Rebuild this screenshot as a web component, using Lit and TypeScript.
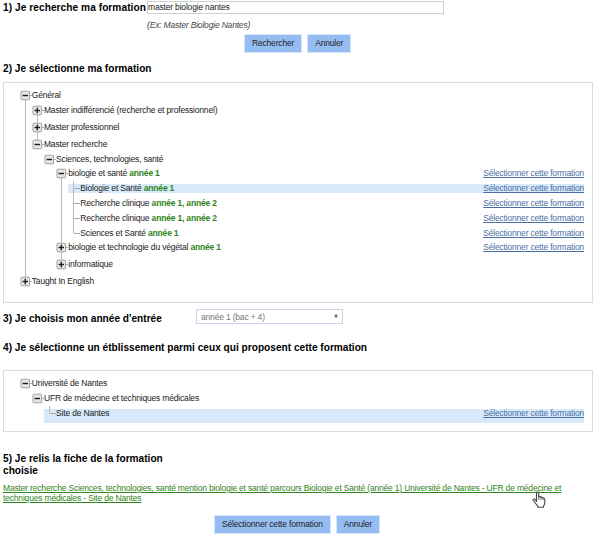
import { LitElement, html, css, svg, nothing } from "lit";
import { customElement, property } from "lit/decorators.js";
import { classMap } from "lit/directives/class-map.js";

interface TreeNode {
  label: string;
  years?: string;
  state?: "open" | "closed";
  link?: boolean;
  highlight?: "thin" | "full";
  children?: TreeNode[];
}

const FORMATIONS: TreeNode[] = [
  {
    label: "Général",
    state: "open",
    children: [
      { label: "Master indifférencié (recherche et professionnel)", state: "closed" },
      { label: "Master professionnel", state: "closed" },
      {
        label: "Master recherche",
        state: "open",
        children: [
          {
            label: "Sciences, technologies, santé",
            state: "open",
            children: [
              {
                label: "biologie et santé",
                years: "année 1",
                state: "open",
                link: true,
                children: [
                  { label: "Biologie et Santé", years: "année 1", link: true, highlight: "thin" },
                  { label: "Recherche clinique", years: "année 1, année 2", link: true },
                  { label: "Recherche clinique", years: "année 1, année 2", link: true },
                  { label: "Sciences et Santé", years: "année 1", link: true },
                ],
              },
              { label: "biologie et technologie du végétal", years: "année 1", state: "closed", link: true },
              { label: "informatique", state: "closed" },
            ],
          },
        ],
      },
    ],
  },
  { label: "Taught In English", state: "closed" },
];

const SITES: TreeNode[] = [
  {
    label: "Université de Nantes",
    state: "open",
    children: [
      {
        label: "UFR de médecine et techniques médicales",
        state: "open",
        children: [{ label: "Site de Nantes", link: true, highlight: "full" }],
      },
    ],
  },
];

@customElement("choice-tree")
export class ChoiceTree extends LitElement {
  @property({ attribute: false }) nodes: TreeNode[] = [];

  static styles = css`
    :host { display: block; }
    ul { list-style: none; margin: 0; padding: 0; }
    .children { padding-left: 12.15px; }
    .node { position: relative; }
    .node::before {
      content: "";
      position: absolute;
      left: 5px;
      top: 0;
      bottom: 0;
      width: 1px;
      background: #bcbcbc;
      z-index: 1;
    }
    .node.first.branch::before { top: 7px; }
    .node.last::before { bottom: auto; height: 7px; }
    .node.last.first.branch::before { display: none; }
    .row {
      display: flex;
      align-items: flex-start;
      height: 14.8px;
      line-height: 14.8px;
    }
    .row.closed { height: 17px; }
    .row.full {
      height: 17.5px;
      background: linear-gradient(#d8eafa, #d8eafa) 0 3px / 100% 14.5px no-repeat;
    }
    .row.thin {
      background: linear-gradient(#d8eafa, #d8eafa) 0 3px / 100% 9px no-repeat;
    }
    .handle {
      position: relative;
      z-index: 2;
      flex: none;
      width: 12.3px;
      height: 15px;
    }
    .handle svg { display: block; }
    .label { white-space: pre; color: #222; }
    .years { color: #2f8420; font-weight: bold; }
    .pick {
      margin-left: auto;
      color: #4a6fa5;
      text-decoration: underline;
      white-space: nowrap;
    }
  `;

  private handle(state?: "open" | "closed") {
    if (!state) {
      return svg`<path d="M6 7.5H12.4" stroke="#a8a8a8" fill="none"/>`;
    }
    return svg`
      <path d="M10 7.5H12.4" stroke="#a8a8a8" fill="none"/>
      <rect x="1" y="3.2" width="8.6" height="8.6" rx="0.8" fill="#e6e6e6" stroke="#a2a2a2"/>
      <path d="M2.6 7.5H8" stroke="#1c1c1c" stroke-width="1.4" fill="none"/>
      ${state === "closed" ? svg`<path d="M5.3 4.8V10.2" stroke="#1c1c1c" stroke-width="1.4" fill="none"/>` : nothing}
    `;
  }

  private node(n: TreeNode, i: number, all: TreeNode[]): unknown {
    const item = { node: true, first: i === 0, last: i === all.length - 1, branch: !!n.state };
    const row = {
      row: true,
      closed: n.state === "closed",
      thin: n.highlight === "thin",
      full: n.highlight === "full",
    };
    return html`<li class=${classMap(item)}>
      <div class=${classMap(row)}>
        <span class="handle"><svg width="12.3" height="15" viewBox="0 0 12.3 15">${this.handle(n.state)}</svg></span>
        <span class="label">${n.label}${n.years ? html` <span class="years">${n.years}</span>` : nothing}</span>
        ${n.link ? html`<a class="pick">Sélectionner cette formation</a>` : nothing}
      </div>
      ${n.children ? html`<ul class="children">${n.children.map((c, k, list) => this.node(c, k, list))}</ul>` : nothing}
    </li>`;
  }

  render() {
    return html`<ul>${this.nodes.map((n, i, all) => this.node(n, i, all))}</ul>`;
  }
}

@customElement("app-root")
export class AppRoot extends LitElement {
  static styles = css`
    :host {
      display: flex;
      flex-direction: column;
      box-sizing: border-box;
      width: 600px;
      height: 543px;
      padding: 0 7px 0 3px;
      overflow: hidden;
      background: #fff;
      color: #222;
      font-family: "Liberation Sans", Arial, sans-serif;
      font-size: 8.5px;
      letter-spacing: -0.18px;
    }
    h2 {
      margin: 0;
      color: #000;
      font-size: 10.15px;
      font-weight: bold;
      letter-spacing: 0;
      line-height: 12px;
      white-space: nowrap;
    }
    .search {
      box-sizing: border-box;
      display: grid;
      grid-template-columns: 143.5px 297px;
      height: 63px;
      padding-top: 1px;
      align-content: start;
    }
    .search h2 { padding-top: 1px; letter-spacing: 0.06px; }
    .field {
      box-sizing: border-box;
      height: 13px;
      border: 1px solid #cfcfcf;
      padding: 0 0 0 .5px;
      line-height: 11px;
      color: #222;
      white-space: nowrap;
    }
    .hint { grid-column: 2; padding: 5px 0 0 .5px; line-height: 12px; font-style: italic; color: #444; }
    .buttons { display: flex; gap: 5px; }
    .search .buttons { grid-column: 2; padding: 2.5px 0 0 97.5px; }
    .button {
      box-sizing: border-box;
      height: 19px;
      padding: 0 8px;
      border: 0;
      outline: 1px solid #d5e5fa;
      outline-offset: -1px;
      background: #96bdf2;
      color: #222;
      font: inherit;
      letter-spacing: inherit;
      line-height: 19px;
      white-space: nowrap;
    }
    .frame {
      box-sizing: border-box;
      width: 590px;
      border: 1px solid #dcdcdc;
      padding: 0 8px 0 15.5px;
    }
    .formations { height: 221px; margin-top: 7px; padding-top: 5px; }
    .sites { height: 62px; margin-top: 16px; padding-top: 5px; }
    .year { box-sizing: border-box; display: flex; align-items: flex-start; height: 39px; padding-top: 6px; }
    .year h2 { width: 193px; padding-top: 4px; }
    .select {
      box-sizing: border-box;
      display: flex;
      align-items: center;
      justify-content: space-between;
      width: 147px;
      height: 15px;
      border: 1px solid #c9d6ea;
      padding: 0 4px;
      color: #777;
    }
    .review { width: 170px; margin-top: 21px; }
    .review h2 { white-space: normal; }
    .summary {
      position: relative;
      width: 570px;
      margin-top: 7px;
      line-height: 9.5px;
      color: #2f8420;
    }
    .line { display: block; white-space: nowrap; text-decoration: underline; }
    .cursor { position: absolute; left: 529px; top: 7px; }
    .confirm { margin: 12px 0 0 211px; }
  `;

  render() {
    return html`
      <div class="search">
        <h2>1) Je recherche ma formation</h2>
        <div class="field">master biologie nantes</div>
        <div class="hint">(Ex: Master Biologie Nantes)</div>
        <div class="buttons">
          <button class="button">Rechercher</button>
          <button class="button">Annuler</button>
        </div>
      </div>
      <h2>2) Je sélectionne ma formation</h2>
      <div class="frame formations"><choice-tree .nodes=${FORMATIONS}></choice-tree></div>
      <div class="year">
        <h2>3) Je choisis mon année d'entrée</h2>
        <div class="select">
          <span>année 1 (bac + 4)</span>
          <svg width="4" height="5" viewBox="0 0 4 5"><path d="M0.1 0.7H3.9L2 4.6Z" fill="#666" /></svg>
        </div>
      </div>
      <h2>4) Je sélectionne un étblissement parmi ceux qui proposent cette formation</h2>
      <div class="frame sites"><choice-tree .nodes=${SITES}></choice-tree></div>
      <div class="review"><h2>5) Je relis la fiche de la formation choisie</h2></div>
      <div class="summary">
        <span class="line">Master recherche Sciences, technologies, santé mention biologie et santé parcours Biologie et Santé (année 1) Université de Nantes - UFR de médecine et</span>
        <span class="line">techniques médicales - Site de Nantes</span>
        <svg class="cursor" width="15" height="17" viewBox="0 0 15 17">
          <path
            d="M4.5 10.5V2.2Q4.5 .9 5.6 .9Q6.7 .9 6.7 2.2V6.3Q7 5.3 8 5.5Q9 5.7 9 6.6Q9.6 5.8 10.4 6.2Q11.1 6.5 11.1 7.3Q12.8 6.8 12.8 8.5V11.5Q12.8 13.3 11.6 15V16.2H5.7V15Q4.2 13.5 3.3 12L1.2 9.5Q.7 8.3 1.8 8Q2.6 7.8 3.4 8.9Z"
            fill="#fff" stroke="#444" stroke-width="1.1" stroke-linejoin="round"
          />
          <path d="M6.7 6V9M9 6.6V9M11.1 7.2V9.3" fill="none" stroke="#444" stroke-width=".8" />
        </svg>
      </div>
      <div class="buttons confirm">
        <button class="button">Sélectionner cette formation</button>
        <button class="button">Annuler</button>
      </div>
    `;
  }
}
